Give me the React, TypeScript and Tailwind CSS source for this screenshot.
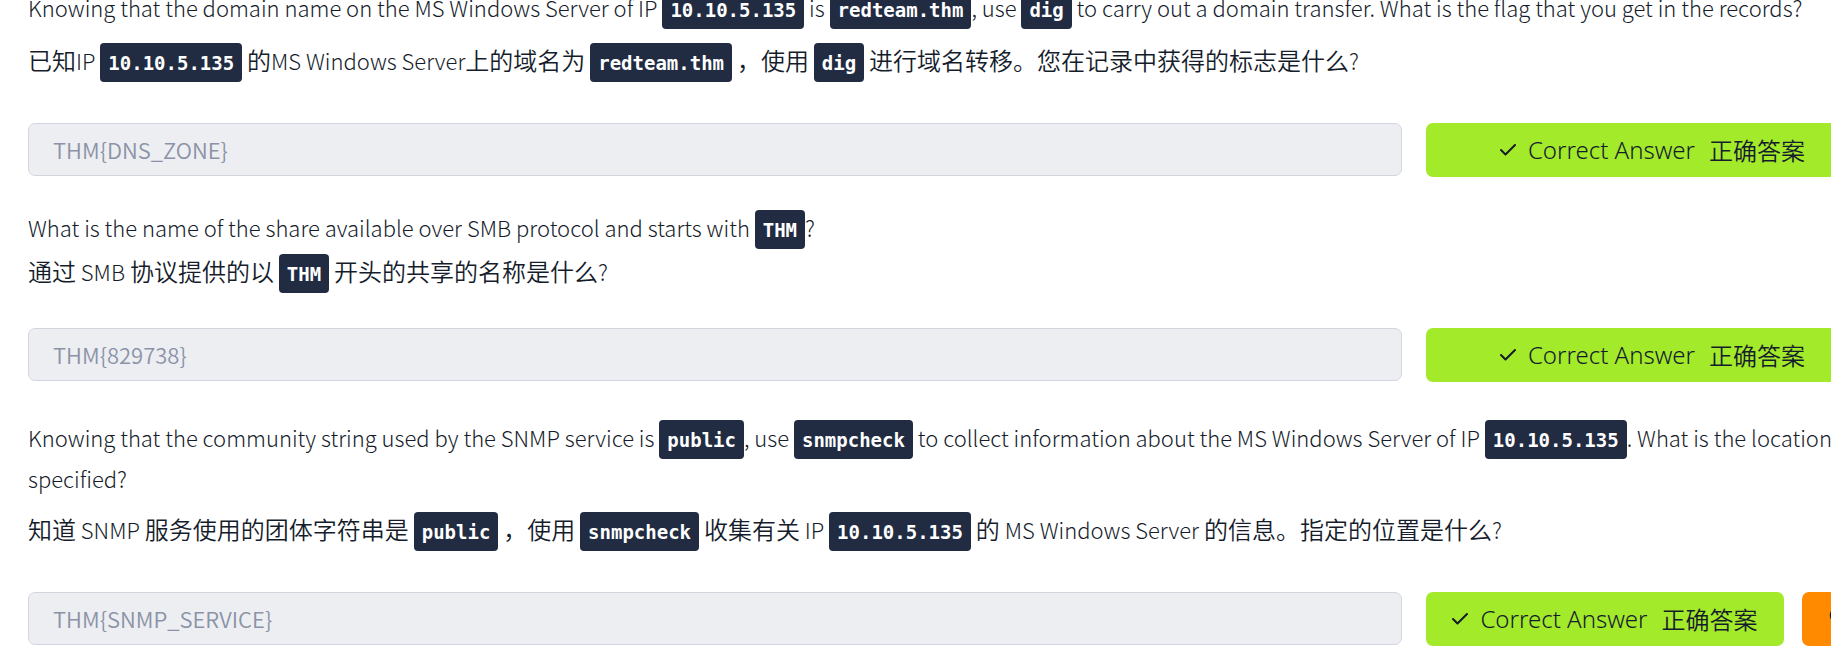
import type { ReactNode } from "react";
import { FaLightbulb } from "react-icons/fa6";

const CJK_RUN = /([\u3000-\u9fff\uff00-\uffef]+)/;

function Mixed({ text }: { text: string }) {
  return (
    <>
      {text.split(CJK_RUN).map((run, i) =>
        i % 2 === 1 ? (
          <span key={i} className="text-[24px] leading-none font-[350]">
            {run}
          </span>
        ) : (
          run
        ),
      )}
    </>
  );
}

function Line({ text, className = "" }: { text: string; className?: string }) {
  return (
    <p className={`text-[22px] leading-[41px] font-light ${className}`}>
      {text.split("`").map((part, i) =>
        i % 2 === 1 ? (
          <code
            key={i}
            className="rounded-[4px] bg-[#212c42] px-2 pt-[9px] pb-2 font-['DejaVu_Sans_Mono',monospace] text-[19px] leading-none font-bold text-white"
          >
            {part}
          </code>
        ) : (
          <Mixed key={i} text={part} />
        ),
      )}
    </p>
  );
}

function CorrectButton() {
  return (
    <button
      type="button"
      className="flex h-[54px] flex-1 items-center justify-center rounded-[7px] bg-[#a3ea2a] font-['Noto_Sans','Noto_Sans_CJK_SC',sans-serif] text-[24px] font-[350] whitespace-nowrap text-[#151c2b]"
    >
      <svg viewBox="0 0 16 12" className="mr-3 h-3 w-4" fill="none" stroke="currentColor" strokeWidth="2">
        <path d="M1 6 L5.5 10.5 L15 1" strokeLinecap="round" strokeLinejoin="round" />
      </svg>
      <span>Correct Answer</span>
      <span className="ml-[14px] font-['Noto_Sans_CJK_SC',sans-serif]">正确答案</span>
    </button>
  );
}

function AnswerRow({ id, value, className, children }: { id: string; value: string; className: string; children?: ReactNode }) {
  return (
    <div className={`grid grid-cols-[1fr_453px] gap-6 ${className}`}>
      <input
        id={id}
        aria-label="Answer"
        readOnly
        defaultValue={value}
        className="h-[53px] w-full min-w-0 rounded-[7px] border border-[#d3d6df] bg-[#edeef2] px-6 pb-[2px] text-[22px] text-[#8b93a7] outline-none"
      />
      <div className="flex gap-[18px]">
        <CorrectButton />
        {children}
      </div>
    </div>
  );
}

export default function App() {
  return (
    <div className="overflow-hidden bg-white">
      <main className="-mt-[13px] -mr-12 ml-7 pb-6 font-['Noto_Sans_CJK_SC',sans-serif] font-[350] text-[#151c2b]" lang="zh-CN">
        <section>
          <Line text="Knowing that the domain name on the MS Windows Server of IP `10.10.5.135` is `redteam.thm`, use `dig` to carry out a domain transfer. What is the flag that you get in the records?" />
          <Line
            className="mt-3"
            text="已知IP `10.10.5.135` 的MS Windows Server上的域名为 `redteam.thm` ，使用 `dig` 进行域名转移。您在记录中获得的标志是什么?"
          />
          <AnswerRow id="dns" value="THM{DNS_ZONE}" className="mt-[42px]" />
        </section>
        <section className="mt-[30px]">
          <Line text="What is the name of the share available over SMB protocol and starts with `THM`?" />
          <Line className="mt-[3px]" text="通过 SMB 协议提供的以 `THM` 开头的共享的名称是什么?" />
          <AnswerRow id="smb" value="THM{829738}" className="mt-9" />
        </section>
        <section className="mt-[35px]">
          <Line text="Knowing that the community string used by the SNMP service is `public`, use `snmpcheck` to collect information about the MS Windows Server of IP `10.10.5.135`. What is the location specified?" />
          <Line
            className="mt-[10px]"
            text="知道 SNMP 服务使用的团体字符串是 `public` ，使用 `snmpcheck` 收集有关 IP `10.10.5.135` 的 MS Windows Server 的信息。指定的位置是什么?"
          />
          <AnswerRow id="snmp" value="THM{SNMP_SERVICE}" className="mt-[42px]">
            <button
              type="button"
              aria-label="Hint"
              className="flex h-[54px] w-[77px] items-center rounded-[7px] bg-[#ff8a00] pl-[27px] text-[#151c2b]"
            >
              <FaLightbulb className="h-6 w-[18px]" />
            </button>
          </AnswerRow>
        </section>
      </main>
    </div>
  );
}
